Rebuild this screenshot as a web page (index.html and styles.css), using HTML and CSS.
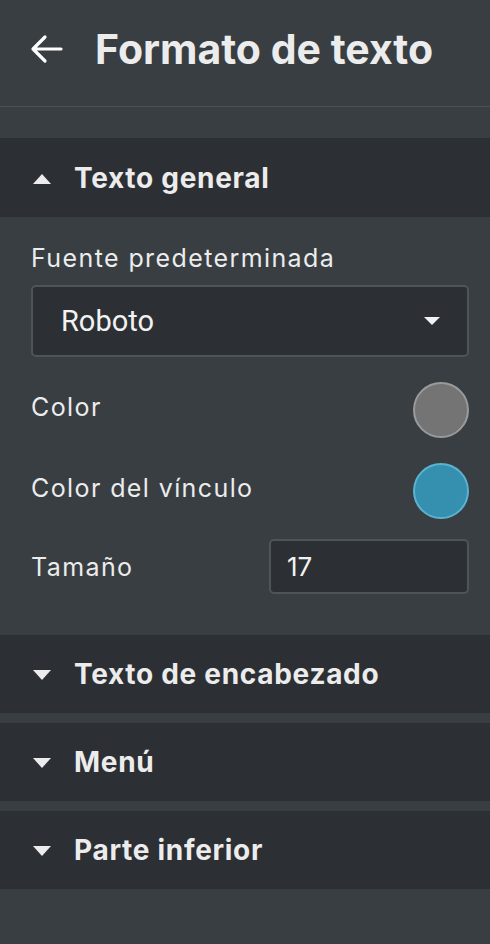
FILE: index.html
```html
<!DOCTYPE html>
<html lang="es">
<head>
    <meta charset="UTF-8">
    <meta name="viewport" content="width=device-width, initial-scale=1.0">
    <title>Formato de texto</title>
    <link rel="stylesheet" href="styles.css">
</head>
<body>
  <div class="sidebar">
    <header class="top-bar">
      <button class="back-btn" aria-label="Volver">
        <svg width="34" height="30" viewBox="0 0 34 30">
          <path d="M32 15 H4 M16 3 L4 15 L16 27" fill="none" stroke="#fff" stroke-width="3.2" stroke-linecap="round" stroke-linejoin="round"/>
        </svg>
      </button>
      <h1>Formato de texto</h1>
    </header>

    <section class="panel open">
      <div class="panel-head"><span class="caret up"></span>Texto general</div>
      <div class="panel-body">
        <label class="field-label">Fuente predeterminada</label>
        <div class="select">
          <span class="select-value">Roboto</span>
          <span class="select-caret"></span>
        </div>
        <div class="row row-color">
          <span class="row-label">Color</span>
          <span class="swatch gray"></span>
        </div>
        <div class="row row-link">
          <span class="row-label">Color del vínculo</span>
          <span class="swatch blue"></span>
        </div>
        <div class="row row-size">
          <span>Tamaño</span>
          <div class="num-input">17</div>
        </div>
      </div>
    </section>

    <section class="panel">
      <div class="panel-head"><span class="caret"></span>Texto de encabezado</div>
    </section>
    <section class="panel">
      <div class="panel-head"><span class="caret"></span>Menú</div>
    </section>
    <section class="panel">
      <div class="panel-head"><span class="caret"></span>Parte inferior</div>
    </section>
  </div>
</body>
</html>
```

FILE: styles.css
```css
body {
    margin: 0;
    background-color: #383e42;
    font-family: Inter, "Open Sans", sans-serif;
    color: #ececec;
}
.sidebar {
    width: 490px;
    min-height: 944px;
    background-color: #383e42;
}
.top-bar {
    display: flex;
    align-items: center;
    height: 107px;
    padding-left: 29px;
    padding-bottom: 8px;
    border-bottom: 1px solid #4b5257;
    box-sizing: border-box;
    margin-bottom: 31px;
}
.back-btn {
    background: none;
    border: none;
    padding: 0;
    margin-right: 32px;
    display: flex;
    cursor: pointer;
}
h1 {
    margin: 0;
    font-size: 41px;
    font-weight: 700;
    color: #ececec;
}
.panel {
    background-color: #2c3034;
    margin-bottom: 10px;
}
.panel-head {
    height: 78px;
    display: flex;
    align-items: center;
    padding-left: 33px;
    font-size: 28px;
    font-weight: 700;
    letter-spacing: 0.7px;
    color: #ececec;
    cursor: pointer;
}
.panel.open .panel-head {
    height: 79px;
}
.caret {
    width: 0;
    height: 0;
    border-left: 9px solid transparent;
    border-right: 9px solid transparent;
    border-top: 10px solid #ececec;
    margin-right: 23px;
    margin-top: 2px;
}
.caret.up {
    border-top: none;
    border-bottom: 10px solid #ececec;
}
.panel-body {
    background-color: #383e42;
    padding: 26px 21px 31px 31px;
}
.field-label {
    display: block;
    font-size: 25px;
    line-height: 30px;
    letter-spacing: 1.4px;
    margin-bottom: 12px;
}
.select {
    display: flex;
    align-items: center;
    justify-content: space-between;
    height: 72px;
    box-sizing: border-box;
    border: 2px solid #4e5458;
    border-radius: 5px;
    background-color: #2c3034;
    padding: 0 27px 0 28px;
}
.select-value {
    font-family: Roboto, sans-serif;
    font-size: 29px;
    color: #f2f2f2;
}
.select-caret {
    width: 0;
    height: 0;
    border-left: 8px solid transparent;
    border-right: 8px solid transparent;
    border-top: 8px solid #f2f2f2;
}
.row {
    display: flex;
    align-items: center;
    justify-content: space-between;
    font-size: 25px;
    line-height: 30px;
    letter-spacing: 1.4px;
}
.row-label {
    margin-bottom: 7px;
}
.row-color {
    margin-top: 25px;
}
.row-link {
    margin-top: 25px;
}
.row-size {
    margin-top: 20px;
}
.swatch {
    width: 56px;
    height: 56px;
    border-radius: 50%;
    box-sizing: border-box;
    border: 2px solid;
}
.swatch.gray {
    background-color: #747474;
    border-color: #9a9a9a;
}
.swatch.blue {
    background-color: #358faf;
    border-color: #5cb3d1;
}
.num-input {
    width: 200px;
    height: 55px;
    box-sizing: border-box;
    border: 2px solid #4e5458;
    border-radius: 5px;
    background-color: #2c3034;
    padding-left: 16px;
    display: flex;
    align-items: center;
    font-size: 26px;
    letter-spacing: 0;
    color: #f2f2f2;
}
```
